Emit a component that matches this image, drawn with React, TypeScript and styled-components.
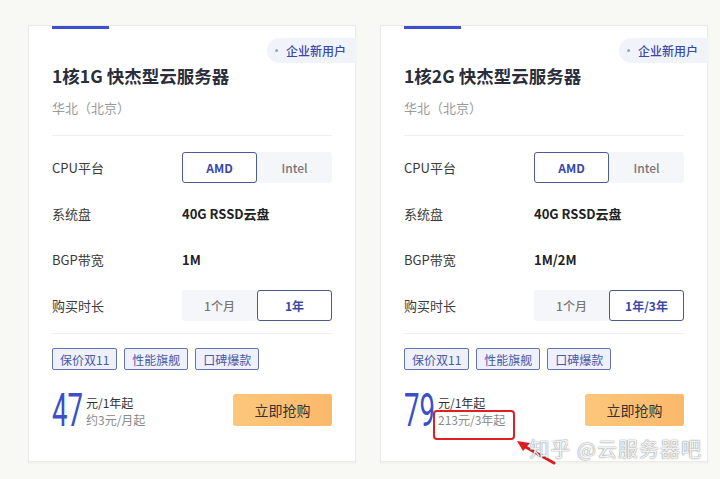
import styled, { createGlobalStyle } from "styled-components";

const GlobalStyle = createGlobalStyle`
  html, body {
    margin: 0;
    padding: 0;
    background: #f8f8f4;
  }
  body {
    font-family: "Noto Sans CJK SC", "Noto Sans", sans-serif;
    color: #333;
  }
`;

const Page = styled.div`
  position: relative;
  width: 720px;
  height: 479px;
  overflow: hidden;
  display: flex;
  gap: 24px;
  padding: 25px 0 0 28px;
  box-sizing: border-box;
`;

const Card = styled.div`
  position: relative;
  width: 328px;
  height: 437px;
  box-sizing: border-box;
  background: #fff;
  border: 1px solid #ebebe8;
  box-shadow: 0 1px 3px rgba(0, 0, 0, 0.04);
  padding: 0 23px;
  display: flex;
  flex-direction: column;
`;

const Accent = styled.div`
  width: 57px;
  height: 3px;
  background: #3d4fd1;
`;

const Badge = styled.div`
  position: absolute;
  top: 12px;
  right: -1px;
  height: 25px;
  padding: 0 10px 0 8px;
  display: flex;
  align-items: center;
  gap: 8px;
  background: #f1f3fa;
  border-radius: 13px 0 0 13px;
  font-size: 12px;
  font-weight: 500;
  color: #3a48a8;

  &::before {
    content: "";
    width: 3px;
    height: 3px;
    border-radius: 50%;
    background: #9aa3c8;
  }
`;

const Title = styled.h2`
  margin: 35px 0 0;
  font-size: 17.5px;
  line-height: 24px;
  font-weight: 700;
  color: #2b2e3a;
`;

const Region = styled.div`
  margin-top: 10px;
  font-size: 13px;
  line-height: 20px;
  color: #9a9a9a;
`;

const Divider = styled.div<{ $gap: number }>`
  margin-top: ${(p) => p.$gap}px;
  height: 1px;
  background: #eeeeee;
`;

const Specs = styled.div`
  margin-top: 8px;
  display: flex;
  flex-direction: column;
`;

const Row = styled.div`
  height: 46px;
  display: grid;
  grid-template-columns: 130px 1fr;
  align-items: center;
`;

const Label = styled.span`
  font-size: 13px;
  color: #3a3a3a;
`;

const Value = styled.span`
  font-size: 13px;
  font-weight: 700;
  color: #222;
`;

const Toggle = styled.div`
  display: flex;
  width: 150px;
  height: 31px;
  background: #f4f6fa;
  border-radius: 3px;
`;

const Option = styled.div<{ $active?: boolean }>`
  flex: 1;
  display: flex;
  align-items: center;
  justify-content: center;
  box-sizing: border-box;
  font-size: 12px;
  font-weight: ${(p) => (p.$active ? 700 : 500)};
  color: ${(p) => (p.$active ? "#3a48a8" : "#777")};
  background: ${(p) => (p.$active ? "#fff" : "transparent")};
  border: 1px solid ${(p) => (p.$active ? "#4d5a8e" : "transparent")};
  border-radius: 3px;
`;

const Tags = styled.div`
  margin-top: 14px;
  display: flex;
  gap: 7px;
`;

const Tag = styled.span`
  height: 22px;
  padding: 0 7px;
  display: flex;
  align-items: center;
  box-sizing: border-box;
  border: 1px solid #6573b3;
  border-radius: 2px;
  background: #eef0fb;
  font-size: 12px;
  color: #4a58a6;
`;

const Footer = styled.div`
  margin-top: 22px;
  display: flex;
  justify-content: space-between;
  align-items: center;
`;

const Price = styled.div`
  display: flex;
  align-items: center;
  gap: 3px;
`;

// tall condensed digits: a regular face squeezed horizontally
const Amount = styled.div`
  width: 31px;
  height: 36px;
  overflow: visible;
`;

const Digits = styled.span`
  display: block;
  font-family: Roboto, "Liberation Sans", sans-serif;
  font-size: 46px;
  line-height: 36px;
  color: #3b50c8;
  white-space: nowrap;
  transform: scaleX(0.6);
  transform-origin: left center;
`;

const PriceText = styled.div`
  display: flex;
  flex-direction: column;
  font-size: 12px;
  line-height: 17px;
  color: #333;
  margin-top: 2px;
`;

const PriceSub = styled.span`
  color: #8a8a8a;
`;

const BuyButton = styled.button`
  width: 99px;
  height: 32px;
  border: none;
  border-radius: 2px;
  background: linear-gradient(90deg, #fbc77c, #fbb86a);
  font-family: inherit;
  font-size: 14px;
  color: #333;
`;

const Mark = styled.div`
  position: absolute;
  left: 52px;
  top: 384px;
  width: 82px;
  height: 30px;
  box-sizing: border-box;
  border: 2px solid #e02020;
  border-radius: 4px;
`;

const Watermark = styled.div`
  position: absolute;
  right: 18px;
  bottom: 16px;
  font-size: 20px;
  letter-spacing: 1px;
  color: rgba(255, 255, 255, 0.92);
  text-shadow: 0 0 1px rgba(0, 0, 0, 0.55), 0 0 2px rgba(0, 0, 0, 0.2);
`;

const Arrow = styled.svg`
  position: absolute;
  left: 514px;
  top: 438px;
`;

type Plan = {
  title: string;
  bandwidth: string;
  term: string;
  amount: string;
  unit: string;
  sub: string;
  marked?: boolean;
};

const plans: Plan[] = [
  { title: "1核1G 快杰型云服务器", bandwidth: "1M", term: "1年", amount: "47", unit: "元/1年起", sub: "约3元/月起" },
  { title: "1核2G 快杰型云服务器", bandwidth: "1M/2M", term: "1年/3年", amount: "79", unit: "元/1年起", sub: "213元/3年起", marked: true },
];

const PlanCard = ({ plan }: { plan: Plan }) => (
  <Card>
    <Accent />
    <Badge>企业新用户</Badge>
    <Title>{plan.title}</Title>
    <Region>华北（北京）</Region>
    <Divider $gap={17} />
    <Specs>
      <Row>
        <Label>CPU平台</Label>
        <Toggle>
          <Option $active>AMD</Option>
          <Option>Intel</Option>
        </Toggle>
      </Row>
      <Row>
        <Label>系统盘</Label>
        <Value>40G RSSD云盘</Value>
      </Row>
      <Row>
        <Label>BGP带宽</Label>
        <Value>{plan.bandwidth}</Value>
      </Row>
      <Row>
        <Label>购买时长</Label>
        <Toggle>
          <Option>1个月</Option>
          <Option $active>{plan.term}</Option>
        </Toggle>
      </Row>
    </Specs>
    <Divider $gap={5} />
    <Tags>
      <Tag>保价双11</Tag>
      <Tag>性能旗舰</Tag>
      <Tag>口碑爆款</Tag>
    </Tags>
    <Footer>
      <Price>
        <Amount>
          <Digits>{plan.amount}</Digits>
        </Amount>
        <PriceText>
          <span>{plan.unit}</span>
          <PriceSub>{plan.sub}</PriceSub>
        </PriceText>
      </Price>
      <BuyButton>立即抢购</BuyButton>
    </Footer>
    {plan.marked && <Mark />}
  </Card>
);

const App = () => (
  <>
    <GlobalStyle />
    <Page>
      {plans.map((p) => (
        <PlanCard key={p.title} plan={p} />
      ))}
      {/* hand-drawn red pointer under the highlighted price */}
      <Arrow width="44" height="28" viewBox="0 0 44 28">
        <path d="M40 25 L8 7" stroke="#d81e1e" strokeWidth="3" strokeLinecap="round" fill="none" />
        <path d="M3 3 L16 5 L9 13 Z" fill="#d81e1e" />
      </Arrow>
      <Watermark>知乎 @云服务器吧</Watermark>
    </Page>
  </>
);

export default App;
